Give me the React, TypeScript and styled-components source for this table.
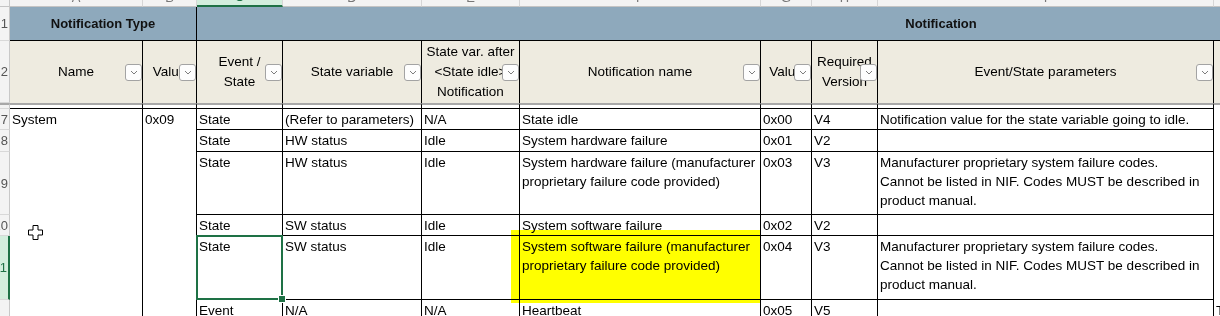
import React from 'react'
import styled, { createGlobalStyle, css } from 'styled-components'

const COLS = [10, 133, 54, 86, 139, 98, 241, 51, 66, 336, 471]
const ROWS = [7, 34, 62, 6, 21, 22, 63, 21, 64, 63]
const LETTERS = ['A', 'B', 'C', 'D', 'E', 'F', 'G', 'H', 'I', 'J']

const GlobalStyle = createGlobalStyle`
  html, body {
    margin: 0;
    padding: 0;
    background: #fff;
  }
  body {
    font-family: "Liberation Sans", Arial, sans-serif;
  }
  * {
    box-sizing: border-box;
  }
`

const Viewport = styled.div`
  position: relative;
  width: 1220px;
  height: 316px;
  overflow: hidden;
  background: #fff;
`

const Sheet = styled.div`
  display: grid;
  grid-template-columns: ${COLS.map(c => c + 'px').join(' ')};
  grid-template-rows: ${ROWS.map(r => r + 'px').join(' ')};
  width: max-content;
  font-size: 13.5px;
  color: #000;
`

const ColHead = styled.div<{ $active?: boolean }>`
  display: flex;
  justify-content: center;
  align-items: flex-end;
  overflow: hidden;
  background: ${p => (p.$active ? '#d3eedd' : '#f3f3f3')};
  border-right: 1px solid #d6d6d6;
  border-bottom: ${p => (p.$active ? '2px solid #1e7145' : '1px solid #c4c4c4')};
  color: ${p => (p.$active ? '#1e7145' : '#777')};
  font-size: 13px;
  line-height: 13px;
  span {
    margin-bottom: 2px;
  }
`

const Corner = styled.div`
  background: #f3f3f3;
  border-right: 1px solid #c8c8c8;
  border-bottom: 1px solid #c4c4c4;
`

const RowHead = styled.div<{ $active?: boolean; $divider?: boolean }>`
  display: flex;
  align-items: center;
  justify-content: flex-end;
  overflow: hidden;
  white-space: nowrap;
  padding-right: 1px;
  background: ${p => (p.$active ? '#d3eedd' : '#f3f3f3')};
  border-right: ${p => (p.$active ? '2px solid #1e7145' : '1px solid #c8c8c8')};
  border-bottom: 1px solid #d8d8d8;
  ${p => p.$divider && css`border-top: 2px solid #a8a8a8;`}
  color: ${p => (p.$active ? '#1e7145' : '#555')};
  font-size: 13px;
`

const GroupHead = styled.div<{ $span: number; $divider?: boolean }>`
  grid-column: span ${p => p.$span};
  display: flex;
  align-items: center;
  justify-content: center;
  background: #8ea9bc;
  border-bottom: 1px solid #000;
  border-right: ${p => (p.$divider ? '1px solid #000' : 'none')};
  font-weight: 700;
  font-size: 13px;
  color: #111;
`

const FieldHead = styled.div<{ $plain?: boolean }>`
  position: relative;
  display: flex;
  align-items: center;
  justify-content: center;
  text-align: center;
  white-space: pre;
  line-height: 20px;
  background: #eeebe0;
  border-right: ${p => (p.$plain ? 'none' : '1px solid #000')};
`

const FilterButton = styled.span`
  position: absolute;
  right: 0;
  top: 23px;
  width: 17px;
  height: 17px;
  display: flex;
  align-items: center;
  justify-content: center;
  background: #fdfdfd;
  border: 1px solid #a3a3a3;
  border-radius: 3px;
`

const Strip = styled.div<{ $plain?: boolean }>`
  background: #fff;
  border-top: 2px solid #a8a8a8;
  ${p =>
    !p.$plain &&
    css`
      border-right: 1px solid #000;
      border-bottom: 1px solid #000;
    `}
`

const Cell = styled.div<{ $plain?: boolean; $rows?: number; $selected?: boolean }>`
  padding: 1px 3px 0 2px;
  line-height: 19px;
  white-space: pre;
  overflow: ${p => (p.$selected ? 'visible' : 'hidden')};
  ${p => p.$rows && css`grid-row: span ${p.$rows};`}
  ${p =>
    !p.$plain &&
    css`
      border-right: 1px solid #000;
      border-bottom: ${p.$rows ? 'none' : '1px solid #000'};
    `}
  ${p =>
    p.$selected &&
    css`
      position: relative;
      &::after {
        content: '';
        position: absolute;
        inset: -1px;
        border: 2px solid #1e7145;
        pointer-events: none;
      }
      &::before {
        content: '';
        position: absolute;
        right: -4px;
        bottom: -4px;
        width: 6px;
        height: 6px;
        background: #1e7145;
        border: 1px solid #fff;
        z-index: 1;
      }
    `}
`

const Highlight = styled.div`
  position: absolute;
  left: 511px;
  top: 230px;
  width: 250px;
  height: 73px;
  background: #ffff00;
  mix-blend-mode: multiply;
  pointer-events: none;
`

const Pointer = styled.svg`
  position: absolute;
  left: 28px;
  top: 225px;
`

const Chevron = () => (
  <svg width="8" height="5" viewBox="0 0 8 5">
    <path d="M1 1 L4 4 L7 1" fill="none" stroke="#7c7c7c" strokeWidth="1" />
  </svg>
)

const FIELDS = [
  'Name',
  'Value',
  'Event /\nState',
  'State variable',
  'State var. after\n<State idle>\nNotification',
  'Notification name',
  'Value',
  'Required\nVersion',
  'Event/State parameters',
]

const PARAMS =
  'Manufacturer proprietary system failure codes.\nCannot be listed in NIF. Codes MUST be described in\nproduct manual.'

const BODY = [
  { n: '7', cells: ['State', '(Refer to parameters)', 'N/A', 'State idle', '0x00', 'V4', 'Notification value for the state variable going to idle.'] },
  { n: '8', cells: ['State', 'HW status', 'Idle', 'System hardware failure', '0x01', 'V2', ''] },
  { n: '9', cells: ['State', 'HW status', 'Idle', 'System hardware failure (manufacturer\nproprietary failure code provided)', '0x03', 'V3', PARAMS] },
  { n: '10', cells: ['State', 'SW status', 'Idle', 'System software failure', '0x02', 'V2', ''] },
  { n: '11', active: true, cells: ['State', 'SW status', 'Idle', 'System software failure (manufacturer\nproprietary failure code provided)', '0x04', 'V3', PARAMS] },
  { n: '12', cells: ['Event', 'N/A', 'N/A', 'Heartbeat', '0x05', 'V5', ''], extra: 'T' },
]

export default function App() {
  return (
    <Viewport>
      <GlobalStyle />
      <Sheet>
        <Corner />
        {LETTERS.map(l => (
          <ColHead key={l} $active={l === 'C'}>
            <span>{l}</span>
          </ColHead>
        ))}

        <RowHead>1</RowHead>
        <GroupHead $span={2} $divider>Notification Type</GroupHead>
        <GroupHead $span={8}>Notification</GroupHead>

        <RowHead>2</RowHead>
        {FIELDS.map((f, i) => (
          <FieldHead key={i}>
            {f}
            <FilterButton>
              <Chevron />
            </FilterButton>
          </FieldHead>
        ))}
        <FieldHead $plain />

        <RowHead $divider />
        {FIELDS.map((_, i) => (
          <Strip key={i} />
        ))}
        <Strip $plain />

        {BODY.map((row, r) => (
          <React.Fragment key={row.n}>
            <RowHead $active={row.active}>{row.n}</RowHead>
            {r === 0 && (
              <>
                <Cell $rows={BODY.length}>System</Cell>
                <Cell $rows={BODY.length}>0x09</Cell>
              </>
            )}
            {row.cells.map((c, i) => (
              <Cell key={i} $selected={row.active && i === 0}>
                {c}
              </Cell>
            ))}
            <Cell $plain>{row.extra ?? ''}</Cell>
          </React.Fragment>
        ))}
      </Sheet>

      <Highlight />
      <Pointer width="15" height="15" viewBox="0 0 15 15">
        <path
          d="M5 0.5 H10 V5 H14.5 V10 H10 V14.5 H5 V10 H0.5 V5 H5 Z"
          fill="#fff"
          stroke="#000"
          strokeWidth="1"
        />
      </Pointer>
    </Viewport>
  )
}
